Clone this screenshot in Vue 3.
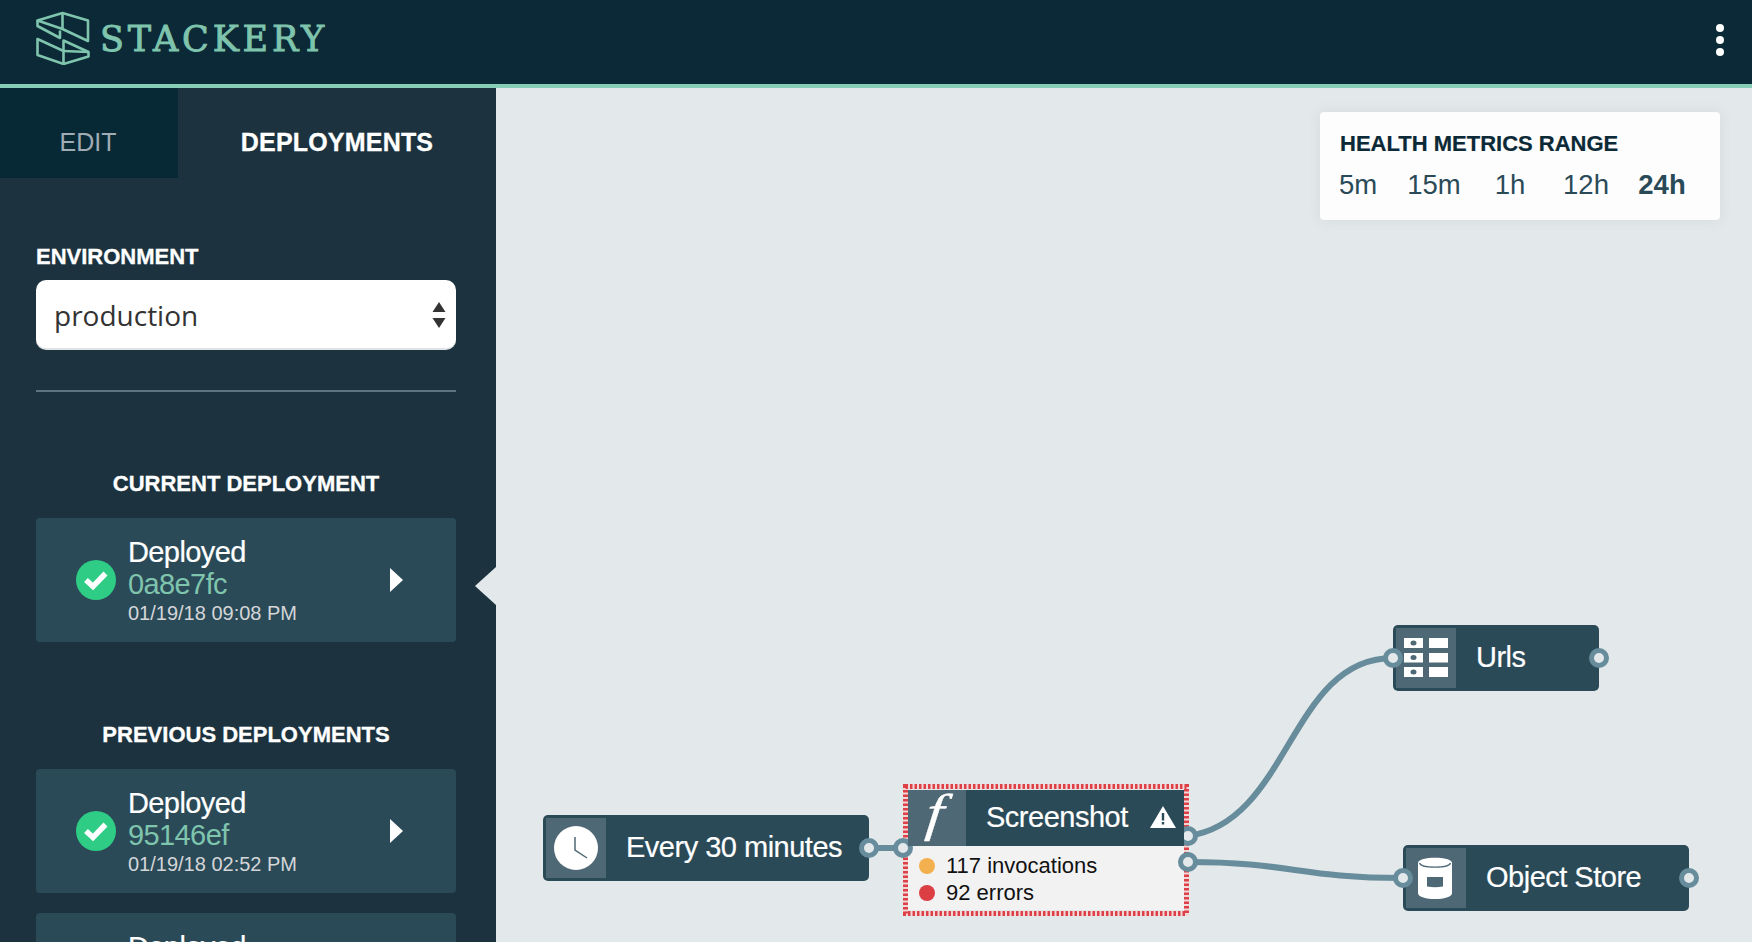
<script setup>
const ranges = [
  { label: '5m' },
  { label: '15m' },
  { label: '1h' },
  { label: '12h' },
  { label: '24h', active: true },
]
const deployments = [
  { hash: '95146ef', date: '01/19/18 02:52 PM' },
  { hash: 'c41d7b2', date: '01/18/18 11:37 AM' },
]
</script>

<template>
  <div class="app">
    <header class="topbar">
      <div class="brand">
        <svg class="logo" viewBox="36 9 56 54" width="56" height="54">
          <g fill="none" stroke="#7fc4ad" stroke-width="2.6" stroke-linejoin="round">
            <path d="M37.500 18.500 L62.500 11 L88 18.500 L88 39 L62.500 27 Z" />
            <path d="M62.500 11 L62.500 27" />
            <path d="M37.500 18.500 L37.500 24 L60 36 L60 28.500" />
            <path d="M37.500 37 L63.500 49 L63.500 62 L37.500 53 Z" />
            <path d="M63.500 49 L63.500 38.500 L88.500 50 L88.500 54.500 L63.500 62" />
            <path d="M63.500 49 L88.500 50" />
          </g>
        </svg>
        <span class="wordmark">STACKERY</span>
      </div>
      <div class="kebab"><i></i><i></i><i></i></div>
    </header>

    <div class="body">
      <aside class="sidebar">
        <div class="tabs">
          <div class="tab">EDIT</div>
          <div class="tab active">DEPLOYMENTS</div>
        </div>
        <div class="side-content">
          <label class="field-label">ENVIRONMENT</label>
          <div class="select">
            <span>production</span>
            <svg width="14" height="26" viewBox="0 0 14 26">
              <path d="M7 0 L13.500 10 L0.500 10 Z M0.500 16 L13.500 16 L7 26 Z" fill="#333" />
            </svg>
          </div>
          <div class="divider"></div>

          <h3 class="section-title current-title">CURRENT DEPLOYMENT</h3>
          <div class="card selected">
            <svg class="check" width="40" height="40" viewBox="0 0 40 40">
              <circle cx="20" cy="20" r="20" fill="#2ecc85" />
              <path d="M10 20 L17 26.500 L29.500 13.500" fill="none" stroke="#fff" stroke-width="5.500" />
            </svg>
            <div class="card-text">
              <div class="status">Deployed</div>
              <div class="hash">0a8e7fc</div>
              <div class="date">01/19/18 09:08 PM</div>
            </div>
            <div class="caret"></div>
          </div>

          <h3 class="section-title prev-title">PREVIOUS DEPLOYMENTS</h3>
          <div class="list">
            <div v-for="d in deployments" :key="d.hash" class="card">
              <svg class="check" width="40" height="40" viewBox="0 0 40 40">
                <circle cx="20" cy="20" r="20" fill="#2ecc85" />
                <path d="M10 20 L17 26.500 L29.500 13.500" fill="none" stroke="#fff" stroke-width="5.500" />
              </svg>
              <div class="card-text">
                <div class="status">Deployed</div>
                <div class="hash">{{ d.hash }}</div>
                <div class="date">{{ d.date }}</div>
              </div>
              <div class="caret"></div>
            </div>
          </div>
        </div>
      </aside>

      <main class="canvas">
        <div class="pointer"></div>

        <section class="metrics">
          <h4>HEALTH METRICS RANGE</h4>
          <div class="ranges">
            <span v-for="r in ranges" :key="r.label" :class="{ on: r.active }">{{ r.label }}</span>
          </div>
        </section>

        <svg class="wires" width="1256" height="854" viewBox="496 88 1256 854">
          <g fill="none" stroke="#678c9b" stroke-width="6">
            <path d="M869 848 L903 848" />
            <path d="M1188 836 C1290 822 1290 658 1393 658" />
            <path d="M1188 862 C1290 862 1300 878 1403 878" />
          </g>
        </svg>

        <div class="node timer">
          <div class="node-icon">
            <svg width="44" height="44" viewBox="0 0 44 44">
              <circle cx="22" cy="22" r="22" fill="#fff" />
              <path d="M21 11 L21 24 L33 32" fill="none" stroke="#4f6875" stroke-width="1.500" />
            </svg>
          </div>
          <div class="node-name">Every 30 minutes</div>
        </div>

        <div class="node urls">
          <div class="node-icon">
            <svg width="44" height="40" viewBox="0 0 44 40">
              <g fill="#fff">
                <rect x="0" y="0" width="19" height="10" />
                <rect x="0" y="15" width="19" height="9.500" />
                <rect x="0" y="29" width="19" height="10" />
                <rect x="25" y="0" width="19" height="10" />
                <rect x="25" y="15" width="19" height="9.500" />
                <rect x="25" y="29" width="19" height="10" />
              </g>
              <g fill="#4f6875">
                <ellipse cx="9.500" cy="5" rx="3" ry="2.500" />
                <ellipse cx="9.500" cy="19.500" rx="3" ry="2.500" />
                <ellipse cx="9.500" cy="34" rx="3" ry="2.500" />
              </g>
            </svg>
          </div>
          <div class="node-name">Urls</div>
        </div>

        <div class="node store">
          <div class="node-icon">
            <svg class="can" width="36" height="44" viewBox="0 0 36 44">
              <path d="M1 7 C1 0 35 0 35 7 L35 37 C35 45 1 45 1 37 Z" fill="#fff" />
              <path d="M2.500 7 C4 12.500 32 12.500 33.500 7" fill="none" stroke="#4f6875" stroke-width="1.200" />
              <path d="M10 21 H26 V30.500 Q18 32 10 30.500 Z" fill="#4f6875" />
            </svg>
          </div>
          <div class="node-name">Object Store</div>
        </div>

        <div class="fn-node">
          <svg class="marching" width="286" height="132" viewBox="0 0 286 132">
            <rect x="2.500" y="2.500" width="281" height="127" fill="none" stroke="#f0d8d8" stroke-width="5" />
            <rect x="2.500" y="2.500" width="281" height="127" fill="none" stroke="#de4048" stroke-width="5" stroke-dasharray="2.500 2" />
          </svg>
          <div class="fn-head">
            <div class="node-icon fn-icon"><span>f</span></div>
            <div class="fn-name">Screenshot</div>
            <svg class="warn" width="26" height="22" viewBox="0 0 26 22">
              <path d="M13 0 L26 22 L0 22 Z" fill="#fff" />
              <path d="M11.800 7 H14.200 V14.500 H11.800 Z M11.800 16 H14.200 V18.500 H11.800 Z" fill="#2a4a58" />
            </svg>
          </div>
          <div class="fn-stats">
            <div class="stat"><i class="dot amber"></i>117 invocations</div>
            <div class="stat"><i class="dot red"></i>92 errors</div>
          </div>
        </div>

        <i class="port" style="left: 869px; top: 848px"></i>
        <i class="port" style="left: 903px; top: 848px"></i>
        <i class="port" style="left: 1188px; top: 836px"></i>
        <i class="port" style="left: 1188px; top: 862px"></i>
        <i class="port" style="left: 1393px; top: 658px"></i>
        <i class="port" style="left: 1599px; top: 658px"></i>
        <i class="port" style="left: 1403px; top: 878px"></i>
        <i class="port" style="left: 1689px; top: 878px"></i>
      </main>
    </div>
  </div>
</template>

<style>
html, body { margin: 0; height: 100%; overflow: hidden; background: #e3e8ea; }
</style>

<style scoped>
.app {
  width: 1752px;
  height: 942px;
  display: flex;
  flex-direction: column;
  overflow: hidden;
  font-family: "Liberation Sans", Arial, sans-serif;
}
.topbar {
  height: 84px;
  flex: none;
  background: #0b2936;
  border-bottom: 4px solid #86cdb8;
  display: flex;
  align-items: flex-start;
  justify-content: space-between;
  padding: 0 28px 0 36px;
}
.brand { display: flex; align-items: center; margin-top: 9px; gap: 8px; }
.logo { display: block; }
.wordmark {
  font-family: "DejaVu Serif", serif;
  font-size: 35px;
  line-height: 54px;
  letter-spacing: 3.8px;
  color: #7fc4ad;
  margin-top: 3px;
  -webkit-text-stroke: 0.9px #7fc4ad;
}
.kebab { display: flex; flex-direction: column; gap: 4px; margin-top: 24px; }
.kebab i { width: 8px; height: 8px; border-radius: 50%; background: #fff; display: block; }

.body { flex: 1; display: flex; min-height: 0; }
.sidebar { width: 496px; flex: none; background: #1c333f; overflow: hidden; }
.tabs { display: flex; height: 90px; }
.tab {
  width: 176px;
  padding-right: 2px;
  background: #072936;
  color: #a0acb4;
  font-size: 25px;
  line-height: 109px;
  text-align: center;
}
.tab.active {
  width: 318px;
  padding: 0;
  background: transparent;
  color: #fff;
  font-weight: 700;
  letter-spacing: 0.2px;
  -webkit-text-stroke: 0.3px #fff;
}
.side-content { padding: 65px 40px 0 36px; }
.field-label {
  display: block;
  color: #fff;
  font-size: 22px;
  line-height: 28px;
  font-weight: 700;
  -webkit-text-stroke: 0.3px #fff;
  margin-bottom: 9px;
}
.select {
  height: 70px;
  box-sizing: border-box;
  background: #fff;
  border-radius: 10px;
  border-bottom: 2px solid #dfe3e6;
  display: flex;
  align-items: center;
  justify-content: space-between;
  padding: 2px 10px 0 18px;
  color: #333;
  font-family: "Open Sans", sans-serif;
  font-size: 28px;
}
.divider { height: 2px; background: #5e7480; margin-top: 40px; }
.section-title {
  margin: 0 0 21px;
  color: #fff;
  font-size: 22px;
  line-height: 26px;
  font-weight: 700;
  -webkit-text-stroke: 0.3px #fff;
  text-align: center;
}
.current-title { margin-top: 79px; }
.prev-title { margin-top: 80px; }
.list { display: flex; flex-direction: column; gap: 20px; }
.card {
  height: 124px;
  box-sizing: border-box;
  background: #2a4a58;
  border-radius: 4px;
  display: flex;
  align-items: center;
  padding-left: 40px;
  position: relative;
}
.check { flex: none; }
.card-text { margin-left: 12px; padding-top: 2px; }
.status { color: #fff; font-size: 29px; line-height: 33px; letter-spacing: -0.6px; -webkit-text-stroke: 0.2px #fff; }
.hash { color: #7fc4ad; font-size: 29px; line-height: 31px; letter-spacing: -0.6px; }
.date { color: #d4d6d8; font-size: 20px; line-height: 26px; }
.caret {
  position: absolute;
  left: 354px;
  top: 50px;
  border-left: 13px solid #fff;
  border-top: 12px solid transparent;
  border-bottom: 12px solid transparent;
}

.canvas { flex: 1; position: relative; background: #e3e8ea; }
.pointer {
  position: absolute;
  left: -21px;
  top: 479px;
  border-right: 21px solid #e3e8ea;
  border-top: 19px solid transparent;
  border-bottom: 19px solid transparent;
}
.metrics {
  position: absolute;
  left: 824px;
  top: 24px;
  width: 400px;
  height: 108px;
  box-sizing: border-box;
  background: #fdfdfd;
  border-radius: 4px;
  box-shadow: 0 0 12px rgba(180, 190, 195, 0.3);
  padding-top: 18px;
}
.metrics h4 {
  margin: 0 0 0 20px;
  color: #0b2936;
  font-size: 22px;
  line-height: 28px;
  font-weight: 700;
  -webkit-text-stroke: 0.2px #0b2936;
}
.ranges {
  display: grid;
  grid-template-columns: repeat(5, 76px);
  color: #2a4a58;
  font-size: 27.500px;
  line-height: 34px;
  margin-top: 10px;
  text-align: center;
}
.ranges .on { font-weight: 700; }
.wires { position: absolute; left: 0; top: 0; pointer-events: none; }

.node {
  position: absolute;
  height: 66px;
  box-sizing: border-box;
  background: #2a4a58;
  border-radius: 5px;
  padding: 3px;
  display: flex;
}
.node-icon {
  width: 60px;
  flex: none;
  background: #4f6875;
  display: flex;
  align-items: center;
  justify-content: center;
}
.node-name {
  color: #fff;
  font-size: 29px;
  line-height: 59px;
  letter-spacing: -0.5px;
  margin-left: 20px;
  white-space: nowrap;
  -webkit-text-stroke: 0.2px #fff;
}
.timer { left: 47px; top: 727px; width: 326px; }
.urls { left: 897px; top: 537px; width: 206px; }
.store { left: 907px; top: 757px; width: 286px; }
.can { margin-left: -2px; }

.fn-node {
  position: absolute;
  left: 407px;
  top: 696px;
  width: 286px;
  height: 132px;
  box-sizing: border-box;
  padding: 6px 5px;
  display: flex;
  flex-direction: column;
}
.marching { position: absolute; left: 0; top: 0; }
.fn-head {
  height: 56px;
  background: #2a4a58;
  display: flex;
  align-items: center;
  position: relative;
  flex: none;
  z-index: 1;
}
.fn-icon { height: 56px; width: 58px; }
.fn-icon span {
  color: #fff;
  font-family: "Liberation Serif", serif;
  font-style: italic;
  font-size: 52px;
  line-height: 56px;
  display: block;
  transform: translate(-2px, -5px) skewX(-6deg) scaleX(1.2);
  -webkit-text-stroke: 0.3px #fff;
}
.fn-name {
  color: #fff;
  font-size: 29px;
  letter-spacing: -0.5px;
  margin-left: 20px;
  margin-top: -2px;
  -webkit-text-stroke: 0.2px #fff;
}
.warn { position: absolute; right: 8px; top: 16px; }
.fn-stats { flex: 1; background: #f2f2f2; padding: 6px 0 0 11px; position: relative; }
.stat { display: flex; align-items: center; color: #111; font-size: 22px; line-height: 27px; }
.dot { width: 16px; height: 16px; border-radius: 50%; margin-right: 11px; }
.amber { background: #f3b04e; }
.red { background: #db3f44; }

.port {
  position: absolute;
  width: 20px;
  height: 20px;
  box-sizing: border-box;
  margin-left: -506px;
  margin-top: -98px;
  border-radius: 50%;
  border: 5px solid #678c9b;
  background: #e3e8ea;
}
</style>
